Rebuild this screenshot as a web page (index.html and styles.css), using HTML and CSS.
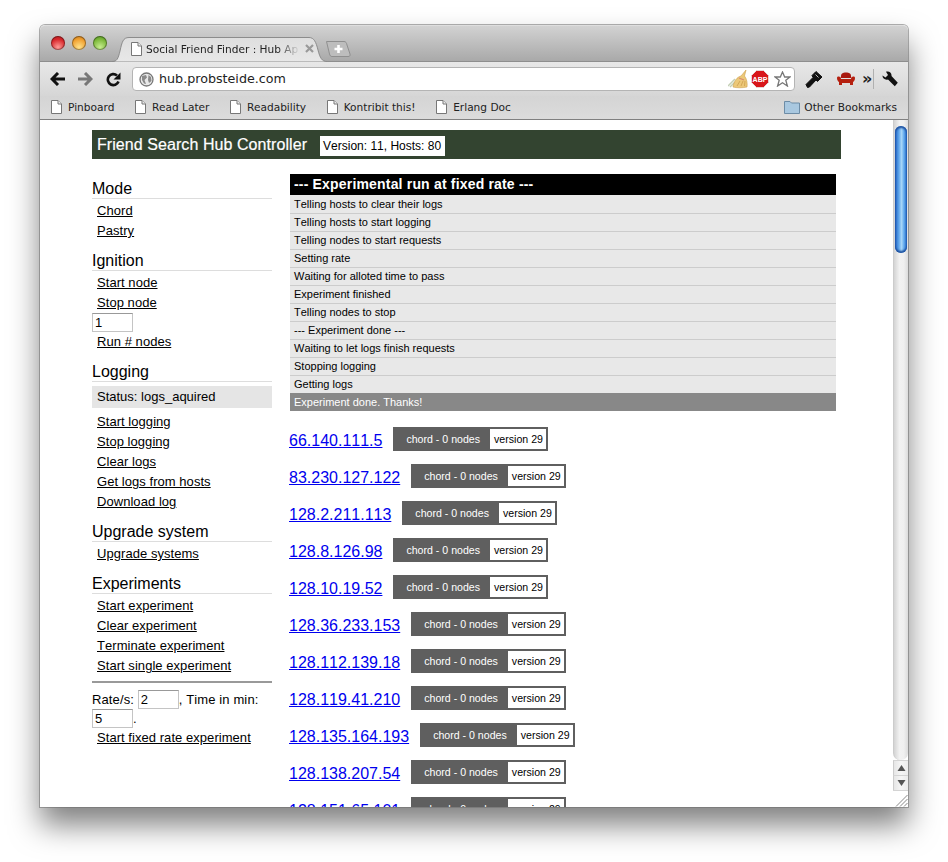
FILE: index.html

```html
<!DOCTYPE html>
<html lang="en">
<head>
<meta charset="UTF-8">
<title>Social Friend Finder : Hub App</title>
<link rel="stylesheet" href="styles.css">
</head>
<body>

<svg width="0" height="0" class="defs">
<symbol id="page" viewBox="0 0 12 14">
<path d="M1.5 .5H8L11.5 4V13.500H1.500Z" fill="#fff" stroke="#777"/>
<path d="M8 .5V4H11.500" fill="#eee" stroke="#777"/>
</symbol>
</svg>

<div class="window">

<!-- tab strip -->
<div class="tabstrip">
<div class="lights">
<span class="light red"></span>
<span class="light yellow"></span>
<span class="light green"></span>
</div>
<div class="tab">
<svg class="tab-bg" width="215" height="25" viewBox="0 0 215 25">
<defs><linearGradient id="tabfill" x1="0" y1="0" x2="0" y2="1"><stop offset="0" stop-color="#dedede"/><stop offset="1" stop-color="#e8e8e8"/></linearGradient></defs>
<path d="M0 24.500C5 24.500 6 22 8 14C10 5 11 .5 17 .5H197C202 .5 204 5 206 13C208 21 210 24.500 215 24.500" fill="url(#tabfill)" stroke="#8c8c8c"/>
</svg>
<svg class="ico-page" width="12" height="14"><use href="#page"/></svg>
<span class="tab-title">Social Friend Finder : Hub Ap</span>
<svg class="tab-close" width="9" height="9" viewBox="0 0 9 9"><path d="M1 1L8 8M8 1L1 8" stroke="#9a9a9a" stroke-width="2.200"/></svg>
</div>
<svg class="newtab" width="25" height="16" viewBox="0 0 25 16">
<path d="M.5 .5H18C20 .5 20.500 2 21 4L24 13C24.500 15 23.500 15.500 22 15.500H6C4.500 15.500 4 14.500 3.500 13Z" fill="#bdbdbd" stroke="#8f8f8f"/>
<path d="M12.500 4V12M8.500 8H16.500" stroke="#fff" stroke-width="2.600"/>
</svg>
</div>

<!-- toolbar -->
<div class="toolbar">
<svg class="nav" width="15" height="14" viewBox="0 0 15 14"><path d="M15 7H3M8 1L2 7L8 13" fill="none" stroke="#111" stroke-width="3"/></svg>
<svg class="nav" width="15" height="14" viewBox="0 0 15 14"><path d="M0 7H12M7 1L13 7L7 13" fill="none" stroke="#777" stroke-width="3"/></svg>
<svg class="nav" width="15" height="15" viewBox="0 0 15 15"><path d="M12.500 9.500A5.500 5.500 0 1 1 11 3.500" fill="none" stroke="#111" stroke-width="2.600"/><path d="M14.500 .5V7.500H7.500Z" fill="#111"/></svg>
<div class="omnibox">
<svg width="15" height="15" viewBox="0 0 15 15"><circle cx="7.500" cy="7.500" r="6.500" fill="#e8e8e8" stroke="#777" stroke-width="1.300"/><path d="M3 4L7 3L8 5.500L5.500 8L7 12L5 11.500L3 8ZM9.500 3L12 5L12.500 9L10 11L9 8Z" fill="#8a8a8a"/></svg>
<span class="url">hub.probsteide.com</span>
<svg class="broom" width="20" height="20" viewBox="0 0 20 20"><path d="M0 17L7 10M2 18L7 13" stroke="#c3cfb4" stroke-width="1.500"/><path d="M5 18C6 12 9 8 13 7L18 1L16.500 7C19 10 19.500 15 19 18C14 19 9 19 5 18Z" fill="#ecc878" stroke="#cda04c" stroke-width=".6"/><path d="M11 9L16 11" stroke="#d88a70" stroke-width="1.200"/><path d="M9 17L12 12M13 17L15 12M16.500 17L17 12" stroke="#c99a48" stroke-width=".7"/></svg>
<svg width="18" height="18" viewBox="0 0 18 18"><path d="M5.500 .5H12.500L17.500 5.500V12.500L12.500 17.500H5.500L.5 12.500V5.500Z" fill="#d8161b" stroke="#e8e8e8" stroke-width=".8"/><text x="9" y="11.500" text-anchor="middle" class="abp">ABP</text></svg>
<svg class="star" width="17" height="16" viewBox="0 0 17 16"><path d="M8.500 1L10.700 6H16L11.800 9.300L13.400 15L8.500 11.700L3.600 15L5.200 9.300L1 6H6.300Z" fill="#fff" stroke="#777" stroke-width="1.300"/></svg>
</div>
<svg class="key" width="18" height="18" viewBox="0 0 18 18"><path d="M1 14.500L8 7.500L7 5.500L11 1.500L17 7L12.500 11.500L11 10L4.500 17L2.500 17.500Z" fill="#111" stroke="#111" stroke-linejoin="round"/><path d="M10.500 4.500L13.500 7.500" stroke="#bbb"/></svg>
<svg class="sofa" width="18" height="14" viewBox="0 0 18 14"><path d="M4 6C3.500 1 6 .5 9 .5C12 .5 14.500 1 14 6Z" fill="#a8180f"/><path d="M0 6C0 4 4 4 4 7H14C14 4 18 4 18 6C18 8 17 9.500 16 10V13H13V11H5V13H2V10C1 9.500 0 8 0 6Z" fill="#b5200f"/></svg>
<span class="more">»</span>
<span class="sep"></span>
<svg class="wrench" width="16" height="16" viewBox="0 0 16 16"><path d="M.5 4.500L3.500 6.500L6 4L4 .8C6.500 -.5 10 1.500 9.500 5L15.800 11.800L12.800 15.200L6 8.500C3 9.500 .2 7 .5 4.500Z" fill="#111"/></svg>
</div>

<!-- bookmarks -->
<div class="bookmarks">
<a class="bm"><svg width="12" height="14"><use href="#page"/></svg>Pinboard</a>
<a class="bm"><svg width="12" height="14"><use href="#page"/></svg>Read Later</a>
<a class="bm"><svg width="12" height="14"><use href="#page"/></svg>Readability</a>
<a class="bm"><svg width="12" height="14"><use href="#page"/></svg>Kontribit this!</a>
<a class="bm"><svg width="12" height="14"><use href="#page"/></svg>Erlang Doc</a>
<a class="bm other"><svg width="16" height="14" viewBox="0 0 16 14"><path d="M.5 13.500V1.500H6L7.500 3H15.500V13.500Z" fill="#a9c8e0" stroke="#6d8ca6"/></svg>Other Bookmarks</a>
</div>

<div class="viewport">
<div class="page">

<div class="header">
<h1>Friend Search Hub Controller</h1>
<span class="version">Version: 11, Hosts: 80</span>
</div>

<div class="columns">
<div class="sidebar">
<h3>Mode</h3>
<ul>
<li><a>Chord</a></li>
<li><a>Pastry</a></li>
</ul>

<h3>Ignition</h3>
<ul>
<li><a>Start node</a></li>
<li><a>Stop node</a></li>
</ul>
<input class="num nodes" type="text" value="1">
<a class="run">Run # nodes</a>

<h3 class="logging">Logging</h3>
<div class="status">Status: logs_aquired</div>
<ul>
<li><a>Start logging</a></li>
<li><a>Stop logging</a></li>
<li><a>Clear logs</a></li>
<li><a>Get logs from hosts</a></li>
<li><a>Download log</a></li>
</ul>

<h3>Upgrade system</h3>
<ul>
<li><a>Upgrade systems</a></li>
</ul>

<h3>Experiments</h3>
<ul>
<li><a>Start experiment</a></li>
<li><a>Clear experiment</a></li>
<li><a>Terminate experiment</a></li>
<li><a>Start single experiment</a></li>
</ul>

<hr>
<div class="rate">Rate/s: <input class="num" type="text" value="2">, Time in min: <input class="num" type="text" value="5">.</div>
<a class="run">Start fixed rate experiment</a>
</div>

<div class="main">
<div class="log">
<div class="log-title">--- Experimental run at fixed rate ---</div>
<div class="log-row first">Telling hosts to clear their logs</div>
<div class="log-row">Telling hosts to start logging</div>
<div class="log-row">Telling nodes to start requests</div>
<div class="log-row">Setting rate</div>
<div class="log-row">Waiting for alloted time to pass</div>
<div class="log-row">Experiment finished</div>
<div class="log-row">Telling nodes to stop</div>
<div class="log-row">--- Experiment done ---</div>
<div class="log-row">Waiting to let logs finish requests</div>
<div class="log-row">Stopping logging</div>
<div class="log-row">Getting logs</div>
<div class="log-done">Experiment done. Thanks!</div>
</div>

<div class="hosts">
<div class="host"><a>66.140.111.5</a><span class="badge"><span class="mode">chord - 0 nodes</span><span class="ver">version 29</span></span></div>
<div class="host"><a>83.230.127.122</a><span class="badge"><span class="mode">chord - 0 nodes</span><span class="ver">version 29</span></span></div>
<div class="host"><a>128.2.211.113</a><span class="badge"><span class="mode">chord - 0 nodes</span><span class="ver">version 29</span></span></div>
<div class="host"><a>128.8.126.98</a><span class="badge"><span class="mode">chord - 0 nodes</span><span class="ver">version 29</span></span></div>
<div class="host"><a>128.10.19.52</a><span class="badge"><span class="mode">chord - 0 nodes</span><span class="ver">version 29</span></span></div>
<div class="host"><a>128.36.233.153</a><span class="badge"><span class="mode">chord - 0 nodes</span><span class="ver">version 29</span></span></div>
<div class="host"><a>128.112.139.18</a><span class="badge"><span class="mode">chord - 0 nodes</span><span class="ver">version 29</span></span></div>
<div class="host"><a>128.119.41.210</a><span class="badge"><span class="mode">chord - 0 nodes</span><span class="ver">version 29</span></span></div>
<div class="host"><a>128.135.164.193</a><span class="badge"><span class="mode">chord - 0 nodes</span><span class="ver">version 29</span></span></div>
<div class="host"><a>128.138.207.54</a><span class="badge"><span class="mode">chord - 0 nodes</span><span class="ver">version 29</span></span></div>
<div class="host"><a>128.151.65.101</a><span class="badge"><span class="mode">chord - 0 nodes</span><span class="ver">version 29</span></span></div>
</div>
</div>
</div>

</div>

<div class="scrollbar">
<div class="track"><div class="thumb"></div></div>
<div class="arrow"><svg width="9" height="8" viewBox="0 0 9 8"><path d="M4.500 1L8.500 7H.5Z" fill="#555"/></svg></div>
<div class="arrow"><svg width="9" height="8" viewBox="0 0 9 8"><path d="M4.500 7L8.500 1H.5Z" fill="#555"/></svg></div>
<div class="resizer"><svg width="13" height="13" viewBox="0 0 13 13"><path d="M1 12.500L12.500 1M5 12.500L12.500 5M9 12.500L12.500 9" stroke="#888"/></svg></div>
</div>
</div>

</div>

</body>
</html>
```

FILE: styles.css

```css
html, body {
margin: 0;
height: 862px;
overflow: hidden;
background: #fff;
}
.defs {
display: block;
height: 0;
}
.window {
width: 868px;
height: 782px;
margin: 25px 0 0 40px;
display: flex;
flex-direction: column;
border-radius: 5px 5px 0 0;
box-shadow: 0 0 0 1px rgba(110, 110, 110, 0.55), 0 18px 30px rgba(0, 0, 0, 0.5);
}

/* tabs */
.tabstrip {
height: 36px;
flex: none;
box-sizing: border-box;
background: linear-gradient(#d2d2d2, #a9a9a9);
border-top: 1px solid #dedede;
border-radius: 5px 5px 0 0;
display: flex;
align-items: flex-end;
position: relative;
}
.lights {
display: flex;
gap: 7px;
position: absolute;
left: 11px;
top: 10px;
}
.light {
width: 14px;
height: 14px;
border-radius: 50%;
box-shadow: inset 0 0 0 1px rgba(0, 0, 0, 0.35);
}
.red { background: radial-gradient(circle at 50% 80%, #ff9c98, #d8282c 60%, #a51a1e); }
.yellow { background: radial-gradient(circle at 50% 80%, #ffe28a, #f0a030 60%, #b8701a); }
.green { background: radial-gradient(circle at 50% 80%, #c8ee90, #7cb83a 60%, #4c8a20); }
.tab {
width: 215px;
height: 25px;
box-sizing: border-box;
padding-bottom: 2px;
margin: 0 0 -1px 72px;
position: relative;
z-index: 1;
display: flex;
align-items: center;
font: 10.6px "DejaVu Sans", sans-serif;
color: #222;
}
.tab-bg {
position: absolute;
left: 0;
top: 0;
}
.ico-page {
position: relative;
margin-left: 18px;
}
.tab-title {
position: relative;
width: 154px;
margin-left: 4px;
white-space: nowrap;
overflow: hidden;
-webkit-mask-image: linear-gradient(to right, #000 85%, transparent);
mask-image: linear-gradient(to right, #000 85%, transparent);
}
.tab-close {
position: relative;
margin-left: 5px;
}
.newtab {
margin: 0 0 4px -1px;
}

/* toolbar */
.toolbar {
height: 35px;
flex: none;
background: linear-gradient(#e8e8e8, #d6d6d6);
border-top: 1px solid #8e8e8e;
display: flex;
align-items: center;
box-sizing: border-box;
padding-left: 10px;
}
.nav {
margin-right: 13px;
flex: none;
}
.omnibox {
width: 663px;
height: 24px;
margin-left: -2px;
box-sizing: border-box;
background: #fff;
border: 1px solid #b4b4b4;
border-radius: 4px;
display: flex;
align-items: center;
padding: 0 3px 0 6px;
}
.url {
font: 12.7px "DejaVu Sans", sans-serif;
color: #222;
margin: -2px 0 0 5px;
flex: 1;
}
.broom {
margin-right: 3px;
}
.abp {
font: bold 7px "Liberation Sans", sans-serif;
fill: #fff;
}
.star {
margin-left: 5px;
}
.key {
margin-left: 10px;
}
.sofa {
margin-left: 14px;
}
.more {
font: bold 16px "DejaVu Sans", sans-serif;
color: #222;
margin-left: 7px;
margin-top: -2px;
}
.sep {
width: 1px;
height: 20px;
background: #b0b0b0;
margin-left: 1px;
}
.wrench {
margin-left: 8px;
}

/* bookmarks */
.bookmarks {
height: 24px;
flex: none;
box-sizing: border-box;
background: linear-gradient(#d4d4d4, #dcdcdc);
border-bottom: 1px solid #808080;
display: flex;
align-items: center;
padding: 0 0 2px 10px;
font: 10.6px "DejaVu Sans", sans-serif;
color: #222;
}
.bm {
display: flex;
align-items: center;
gap: 6px;
margin-right: 19.6px;
}
.bm.other {
margin-left: auto;
margin-right: 11px;
gap: 4px;
}

/* page */
.viewport {
flex: 1;
min-height: 0;
display: flex;
background: #fff;
}
.page {
flex: 1;
overflow: hidden;
font-family: "Liberation Sans", Arial, sans-serif;
font-size: 13px;
font-kerning: none;
color: #000;
}
.header {
margin: 10px 52px 0 52px;
height: 29px;
background: #334430;
display: flex;
align-items: center;
padding-left: 5px;
}
h1 {
font-size: 16px;
font-weight: normal;
color: #fff;
letter-spacing: 0.07px;
margin: 0 13px 0 0;
-webkit-text-stroke: 0.2px #fff;
}
.version {
background: #fff;
font-size: 12px;
padding: 3px 4px 3px 3px;
margin-top: 2px;
}
.columns {
display: flex;
margin-left: 52px;
margin-top: 15px;
}
.sidebar {
width: 180px;
margin-right: 18px;
flex: none;
}
h3 {
font-size: 16px;
font-weight: normal;
margin: 10px 0 0;
line-height: 19px;
border-bottom: 1px solid #ddd;
}
h3:first-child {
margin-top: 5px;
}
h3.logging {
margin-bottom: 4px;
}
ul {
list-style: none;
margin: 2px 0 0;
padding: 0;
}
li {
line-height: 20px;
padding-left: 5px;
}
.sidebar a {
color: #000;
text-decoration: underline;
letter-spacing: 0.05px;
}
.run {
display: block;
padding-left: 5px;
line-height: 20px;
}
.num {
width: 41px;
height: 19px;
box-sizing: border-box;
border: 1px solid #c4c4c4;
border-top-color: #999;
font: 13px "Liberation Sans", sans-serif;
padding: 0 2px;
background: #fff;
vertical-align: top;
margin: 0;
}
.nodes {
display: block;
}
.status {
background: #e5e5e5;
height: 22px;
line-height: 22px;
padding-left: 5px;
margin-bottom: 4px;
}
hr {
border: none;
border-top: 2px solid #999;
margin: 5px 0 0;
}
.rate {
line-height: 19px;
margin-top: 7px;
letter-spacing: 0.12px;
}
.main {
flex: none;
width: 546px;
}
.log {
font-size: 11px;
}
.log-title {
background: #000;
color: #fff;
font-size: 14px;
font-weight: bold;
letter-spacing: 0.18px;
height: 21px;
line-height: 21px;
padding-left: 4px;
}
.log-row {
background: #e8e8e8;
height: 17px;
line-height: 17px;
border-top: 1px solid #ccc;
padding-left: 4px;
}
.log-row.first {
height: 18px;
line-height: 18px;
border-top: none;
}
.log-done {
background: #888;
color: #fff;
height: 18px;
line-height: 18px;
padding-left: 4px;
}
.hosts {
margin-top: 16px;
margin-left: -1px;
}
.host {
height: 24px;
margin-bottom: 13px;
display: flex;
align-items: center;
white-space: nowrap;
}
.host a {
font-size: 16px;
color: #00e;
text-decoration: underline;
margin-top: 3px;
}
.badge {
display: flex;
margin-left: 11px;
height: 24px;
box-sizing: border-box;
background: #5f5f5f;
border: 2px solid #5f5f5f;
font-size: 10.6px;
line-height: 20px;
}
.mode {
color: #fff;
padding: 0 10px 0 11px;
}
.ver {
background: #fff;
color: #000;
padding: 0 3.5px 0 4px;
}

/* scrollbar */
.scrollbar {
width: 15px;
flex: none;
display: flex;
flex-direction: column;
}
.track {
flex: 1;
background: linear-gradient(to right, #d4d4d4, #f2f2f2 40%, #f0f0f0 70%, #dcdcdc);
border-left: 1px solid #ccc;
border-radius: 0 0 7px 7px;
padding-top: 6px;
box-sizing: border-box;
}
.thumb {
width: 12px;
margin-left: 1px;
height: 127px;
border-radius: 6px;
background: linear-gradient(to right, #1f5fc0, #5aa2ea 30%, #a8d6f8 55%, #62aaee 75%, #2468c8);
box-shadow: inset 0 2px 2px #1d4f9e, inset 0 -2px 2px #1d4f9e;
}
.arrow {
height: 15px;
box-sizing: border-box;
background: linear-gradient(to right, #e6e6e6, #f6f6f6 50%, #ececec);
border-top: 1px solid #d4d4d4;
border-left: 1px solid #ccc;
display: flex;
align-items: center;
justify-content: center;
}
.resizer {
height: 17px;
box-sizing: border-box;
display: flex;
align-items: flex-end;
justify-content: flex-end;
background: #fff;
border-top: 1px solid #d4d4d4;
}
```
